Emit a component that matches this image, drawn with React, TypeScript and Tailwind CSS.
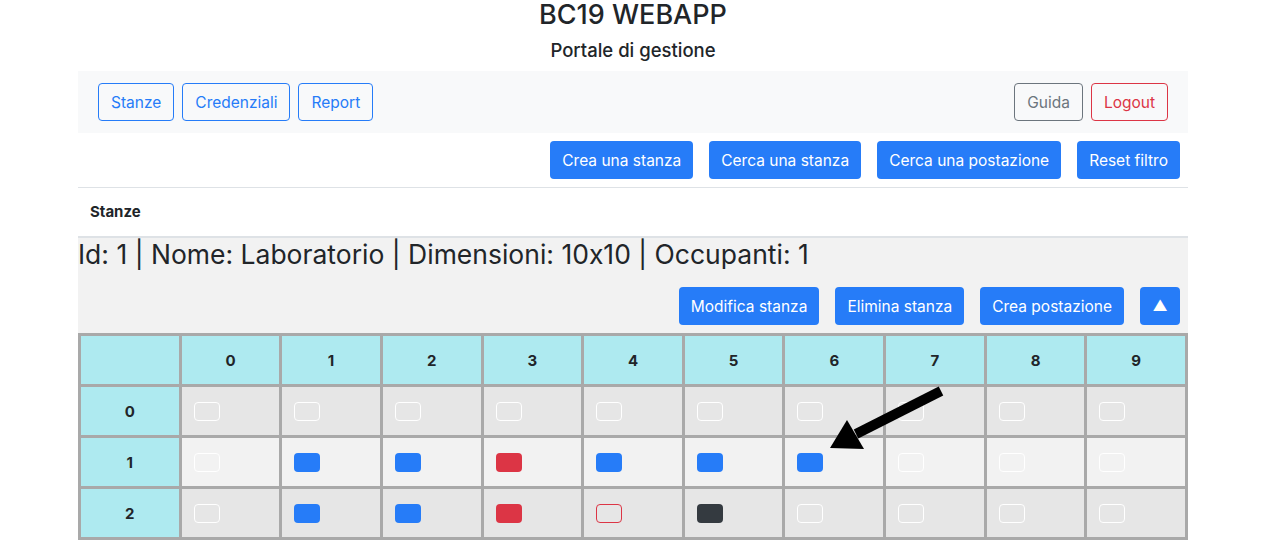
import React from "react";

type Seat = "empty" | "blue" | "red" | "dark" | "redOutline";

const cols = [0, 1, 2, 3, 4, 5, 6, 7, 8, 9];

const rows: { id: number; bg: string; seats: Seat[] }[] = [
  { id: 0, bg: "bg-[#e6e6e6]", seats: ["empty", "empty", "empty", "empty", "empty", "empty", "empty", "empty", "empty", "empty"] },
  { id: 1, bg: "bg-[#f2f2f2]", seats: ["empty", "blue", "blue", "red", "blue", "blue", "blue", "empty", "empty", "empty"] },
  { id: 2, bg: "bg-[#e6e6e6]", seats: ["empty", "blue", "blue", "red", "redOutline", "dark", "empty", "empty", "empty", "empty"] },
];

const seatClass: Record<Seat, string> = {
  empty: "border border-white",
  blue: "bg-[#267cf8]",
  red: "bg-[#dc3545]",
  dark: "bg-[#343a40]",
  redOutline: "border border-[#dc3545]",
};

function OutlineButton({ label, color }: { label: string; color: string }) {
  return (
    <button className={`h-[38px] rounded-[4px] border px-3 pt-px text-[15.5px] ${color}`}>{label}</button>
  );
}

function BlueButton({ label }: { label: string }) {
  return (
    <button className="h-[38px] rounded-[4px] bg-[#267cf8] px-3 pt-px text-[15.5px] text-white">{label}</button>
  );
}

export default function App() {
  return (
    <div className="relative min-h-[540px] bg-white font-['Inter',sans-serif] text-[#212529] [font-feature-settings:'calt'_0]">
      <div className="ml-[78px] w-[1110px]">
        <h3 className="text-center text-[27px] font-medium leading-[30px]">BC19 WEBAPP</h3>
        <h5 className="mt-[8px] text-center text-[18.5px] font-medium leading-[24px]">Portale di gestione</h5>

        {/* Navbar */}
        <nav className="mt-[9px] flex items-center justify-between bg-[#f8f9fa] px-5 py-3">
          <div className="flex gap-2">
            <OutlineButton label="Stanze" color="border-[#267cf8] text-[#267cf8]" />
            <OutlineButton label="Credenziali" color="border-[#267cf8] text-[#267cf8]" />
            <OutlineButton label="Report" color="border-[#267cf8] text-[#267cf8]" />
          </div>
          <div className="flex gap-2">
            <OutlineButton label="Guida" color="border-[#6c757d] text-[#6c757d]" />
            <OutlineButton label="Logout" color="border-[#dc3545] text-[#dc3545]" />
          </div>
        </nav>

        <div className="flex justify-end gap-4 border-b border-[#dee2e6] px-2 pt-2 pb-2">
          <BlueButton label="Crea una stanza" />
          <BlueButton label="Cerca una stanza" />
          <BlueButton label="Cerca una postazione" />
          <BlueButton label="Reset filtro" />
        </div>

        <div className="flex h-[50px] items-center border-b-2 border-[#dee2e6] px-3 text-[15px] font-bold">
          Stanze
        </div>

        {/* Room */}
        <div className="bg-[#f2f2f2]">
          <h3 className="text-[26.5px] font-normal leading-[32px]">
            Id: 1 | Nome: Laboratorio | Dimensioni: 10x10 | Occupanti: 1
          </h3>
          <div className="mt-[17px] flex justify-end gap-4 px-2 pb-2">
            <BlueButton label="Modifica stanza" />
            <BlueButton label="Elimina stanza" />
            <BlueButton label="Crea postazione" />
            <button className="h-[38px] w-[40px] rounded-[4px] bg-[#267cf8] text-[15px] text-white">▲</button>
          </div>
        </div>

        <div className="grid grid-cols-11 gap-[3px] bg-[#a9a9a9] p-[3px]">
          <div className="h-[48px] bg-[#aeeaf0]" />
          {cols.map((c) => (
            <div key={c} className="flex h-[48px] items-center justify-center bg-[#aeeaf0] pt-[3px] text-[15px] font-bold">
              {c}
            </div>
          ))}
          {rows.map((r) => (
            <React.Fragment key={r.id}>
              <div className="flex h-[48px] items-center justify-center bg-[#aeeaf0] pt-[3px] text-[15px] font-bold">
                {r.id}
              </div>
              {r.seats.map((s, i) => (
                <div key={i} className={`flex h-[48px] items-center pl-3 ${r.bg}`}>
                  <div className={`h-[19px] w-[26px] rounded-[4px] ${seatClass[s]}`} />
                </div>
              ))}
            </React.Fragment>
          ))}
        </div>
      </div>

      {/* Annotation arrow */}
      <svg className="absolute left-[820px] top-[380px]" width="130" height="75" viewBox="0 0 130 75">
        <line x1="121" y1="11" x2="36" y2="54" stroke="black" strokeWidth="10" />
        <polygon points="10,68 27,40 44,69" fill="black" />
      </svg>
    </div>
  );
}
